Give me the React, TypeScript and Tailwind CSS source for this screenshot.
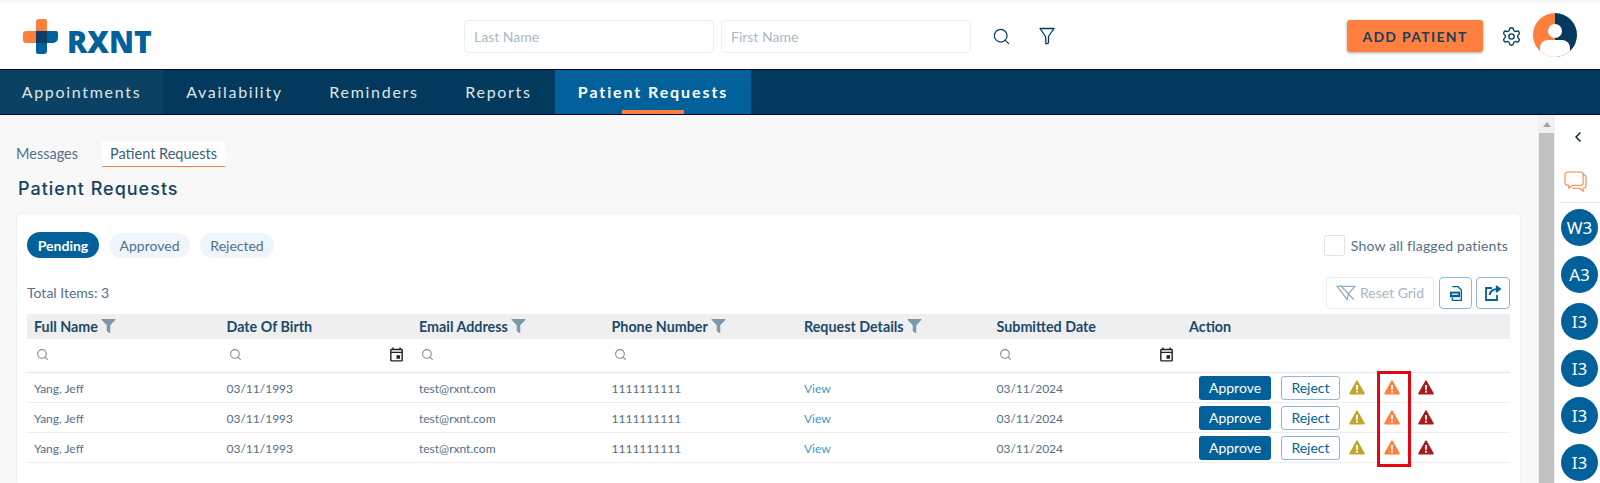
import React from 'react';
import { Search, Settings, ChevronLeft } from 'lucide-react';
import { FaFilter } from 'react-icons/fa';
import { MdOutlineEvent } from 'react-icons/md';

const columns = [
  { title: 'Full Name', filter: true, search: true },
  { title: 'Date Of Birth', search: true, calendar: true },
  { title: 'Email Address', filter: true, search: true },
  { title: 'Phone Number', filter: true, search: true },
  { title: 'Request Details', filter: true },
  { title: 'Submitted Date', search: true, calendar: true },
  { title: 'Action' },
];

const rowGrid = 'grid grid-cols-[repeat(6,192.5px)_1fr] pl-[7px]';

const Warning: React.FC<{ color: string }> = ({ color }) => (
  <svg viewBox="0 0 16 15" className="w-[16px] h-[15px]">
    <path d="M8 1.2 15 13.6H1Z" fill={color} stroke={color} strokeWidth="1.6" strokeLinejoin="round" />
    <rect x="7.1" y="5" width="1.8" height="4.8" fill="#fff" />
    <rect x="7.1" y="10.8" width="1.8" height="1.8" fill="#fff" />
  </svg>
);

const Logo = () => (
  <div className="flex items-center gap-[9px] ml-[23px] w-[441px]">
    <svg viewBox="0 0 35 35" className="w-[35px] h-[35px] shrink-0">
      <path d="M13 12V3a3 3 0 0 1 3-3h6a2 2 0 0 1 2 2v22H3a3 3 0 0 1-3-3v-6a3 3 0 0 1 3-3Z" fill="#ff7f3f" />
      <path d="M13 12h20a2 2 0 0 1 2 2v5a5 5 0 0 1-5 5h-6v8a3 3 0 0 1-3 3h-6a2 2 0 0 1-2-2Z" fill="#02609b" />
      <rect x="13" y="12" width="11" height="12" fill="#0b3d66" />
    </svg>
    <span className="font-['Open_Sans',sans-serif] font-extrabold text-[30px] leading-none text-[#02609b] mt-[12px]">RXNT</span>
  </div>
);

const Avatar = () => (
  <svg viewBox="0 0 44 44" className="w-[44px] h-[44px] -mt-[3px]">
    <defs>
      <clipPath id="avatar-clip">
        <circle cx="22" cy="22" r="22" />
      </clipPath>
    </defs>
    <g clipPath="url(#avatar-clip)">
      <rect width="22" height="44" fill="#ff7f3f" />
      <rect x="22" width="22" height="44" fill="#03395c" />
      <circle cx="22" cy="18" r="7" fill="#fff" />
      <path d="M7 44V35a8 8 0 0 1 8-8h14a8 8 0 0 1 8 8v9Z" fill="#fff" />
    </g>
  </svg>
);

const TopBar = () => (
  <header className="h-[66px] bg-white flex items-center shrink-0">
    <Logo />
    <input placeholder="Last Name" className="w-[250px] h-[33px] border border-[#ebeef1] rounded-[4px] px-[9px] text-[14px] placeholder:text-[#a9b9c6] outline-none" />
    <input placeholder="First Name" className="w-[250px] h-[33px] ml-[7px] border border-[#ebeef1] rounded-[4px] px-[9px] text-[14px] placeholder:text-[#a9b9c6] outline-none" />
    <Search className="w-[19px] h-[19px] ml-[21px] text-[#03395c]" strokeWidth={1.5} />
    <svg viewBox="0 0 16 18" className="w-[16px] h-[18px] ml-[28px]" fill="none" stroke="#03395c" strokeWidth="1.3" strokeLinejoin="round">
      <path d="M1 1.5h14L9.5 9.5V16L7 17l-.5-7.5Z" />
    </svg>
    <button className="w-[136px] h-[32px] ml-[292px] rounded-[3px] bg-[#ff7f3f] text-[#17405f] text-[14px] font-bold tracking-[1.3px] shadow-[0_1px_3px_rgba(0,0,0,0.35)]">ADD PATIENT</button>
    <Settings className="w-[21px] h-[21px] ml-[18px] text-[#03395c]" strokeWidth={1.5} />
    <div className="ml-[11px]"><Avatar /></div>
  </header>
);

const NavBar = () => (
  <nav className="h-[46px] bg-[#03395c] border-y border-[#00003f] flex shrink-0 text-[16px] tracking-[1.7px] text-[#dfe6ea]">
    <a className="w-[163px] bg-[#0b4263] flex items-center justify-center">Appointments</a>
    <a className="w-[143px] flex items-center justify-center">Availability</a>
    <a className="w-[136px] flex items-center justify-center">Reminders</a>
    <a className="w-[113px] flex items-center justify-center">Reports</a>
    <a className="relative w-[196px] bg-[#02609b] flex items-center justify-center font-bold tracking-[1.9px] text-white">
      Patient Requests
      <span className="absolute bottom-0 left-[67px] w-[62px] h-[4px] bg-[#ff7f3f]" />
    </a>
  </nav>
);

const Toolbar = () => (
  <div className="flex items-center h-[32px] mt-[19px]">
    <span className="text-[14px] text-[#53708a] pb-[1px]">Total Items: 3</span>
    <button className="ml-auto w-[108px] h-[32px] rounded-[4px] border border-[#ebeff2] flex items-center justify-center gap-[4px] text-[14px] text-[#a4b7c6] pb-[1px]">
      <svg viewBox="0 0 18 16" className="w-[20px] h-[18px]" fill="none" stroke="#8eb0c7" strokeWidth="1.2">
        <path d="M1 2 17 2 11 9 10 14 7 10ZM4 1 16 14" />
      </svg>
      Reset Grid
    </button>
    <button className="ml-[5px] w-[33px] h-[32px] rounded-[4px] border border-[#8fb6d2] flex items-center justify-center">
      <svg viewBox="0 0 14 16" className="w-[13px] h-[15px]">
        <path d="M3.6 .7h6.2l3.5 3.5v11.1H3.6v-3" fill="none" stroke="#02609b" strokeWidth="1.4" />
        <rect x="1" y="6" width="11" height="6" fill="#02609b" />
        <rect x="3" y="8" width="7" height="1.6" fill="#cfe2ef" />
      </svg>
    </button>
    <button className="ml-[4px] w-[34px] h-[32px] rounded-[4px] border border-[#8fb6d2] flex items-center justify-center">
      <svg viewBox="0 0 18 16" className="w-[18px] h-[16px]" fill="none" stroke="#02609b" strokeWidth="1.8">
        <path d="M13 10v5H2V3h6" />
        <path d="M5.5 10c.5-3.5 3.5-6 9-6" />
        <path d="M12 1l4 3-4 3" fill="#02609b" />
      </svg>
    </button>
  </div>
);

const PatientTable = () => (
  <div className="mt-[5px] text-[12px] text-[#53708a]">
    <div className={`${rowGrid} h-[25px] bg-[#efefef] items-center text-[14.3px] font-bold text-[#1c4a68]`}>
      {columns.map((c) => (
        <div key={c.title} className="flex items-center gap-[3px]">
          {c.title}
          {c.filter && <FaFilter className="w-[15px] h-[14px] text-[#7b99ad] -mt-[2px]" />}
        </div>
      ))}
    </div>
    <div className={`${rowGrid} h-[34px] items-center border-b border-[#e6e6e6]`}>
      {columns.map((c) => (
        <div key={c.title} className="flex items-center justify-between pl-[2px] pr-[14px] pb-[2px] h-full">
          {c.search ? <Search className="w-[13px] h-[13px] text-[#8a8a8a]" strokeWidth={2} /> : <span />}
          {c.calendar && <MdOutlineEvent className="w-[17px] h-[17px] text-[#222]" />}
        </div>
      ))}
    </div>
    {[0, 1, 2].map((i) => (
      <div key={i} className={`${rowGrid} h-[30px] items-center border-b border-[#eeeeee]`}>
        <div className="pt-[2px]">Yang, Jeff</div>
        <div className="pt-[2px]">03/11/1993</div>
        <div className="pt-[2px]">test@rxnt.com</div>
        <div className="pt-[2px]">1111111111</div>
        <div className="pt-[2px] text-[#3f97cf]">View</div>
        <div className="pt-[2px]">03/11/2024</div>
        <div className="flex items-center pl-[10px]">
          <button className="w-[72px] h-[24px] rounded-[3px] bg-[#02609b] text-white text-[14px]">Approve</button>
          <button className="w-[59px] h-[24px] ml-[10px] rounded-[3px] border border-[#8fb6d2] text-[#02609b] text-[14px]">Reject</button>
          <div className="ml-[9px]"><Warning color="#c3a52d" /></div>
          <div className="ml-[19px]"><Warning color="#ff7f3f" /></div>
          <div className="ml-[18px]"><Warning color="#a81c1c" /></div>
        </div>
      </div>
    ))}
  </div>
);

const Card = () => (
  <section className="relative mt-[12px] ml-[17px] mr-[18px] flex-1 bg-white rounded-t-[4px] shadow-[0_0_2px_rgba(0,0,0,0.1)] px-[10px] pt-[18px]">
    <div className="flex items-center h-[26px] gap-[10px] text-[14px]">
      <span className="w-[72px] h-[26px] rounded-full bg-[#02609b] text-white font-bold flex items-center justify-center">Pending</span>
      <span className="w-[81px] h-[25px] rounded-full bg-[#eff5fa] text-[#53708a] flex items-center justify-center">Approved</span>
      <span className="w-[74px] h-[25px] rounded-full bg-[#eff5fa] text-[#53708a] flex items-center justify-center">Rejected</span>
      <label className="ml-auto mr-[2px] flex items-center gap-[6px] tracking-[0.2px] text-[#53708a]">
        <span className="w-[21px] h-[21px] border border-[#e3e3e3] rounded-[2px]" />
        Show all flagged patients
      </label>
    </div>
    <Toolbar />
    <PatientTable />
    {/* red markup box around the orange flags */}
    <div className="absolute left-[1360px] top-[157px] w-[34px] h-[96px] border-[3px] border-[#e30613]" />
  </section>
);

const Sidebar = () => (
  <aside className="w-[45px] bg-white flex flex-col shrink-0 overflow-hidden">
    <ChevronLeft className="w-[16px] h-[16px] mt-[14px] ml-[15px] text-[#10331f]" strokeWidth={2.5} />
    <svg viewBox="0 0 24 23" className="w-[23px] h-[22px] mt-[26px] mb-[9px] ml-[9px]" fill="none" stroke="#ff7f3f" strokeWidth="1.1">
      <path d="M4 1h13a3 3 0 0 1 3 3v8a3 3 0 0 1-3 3H9l-4 3v-3H4a3 3 0 0 1-3-3V4a3 3 0 0 1 3-3Z" />
      <path d="M20 4a3 3 0 0 1 3 3v8a3 3 0 0 1-3 3v3l-4-3H9" />
    </svg>
    <div className="w-[41px] ml-[4px] border-t border-[#e8e8e8] mb-[6px]" />
    <div className="flex flex-col gap-[10px] ml-[6px]">
      {['W3', 'A3', 'I3', 'I3', 'I3', 'I3'].map((label, i) => (
        <div key={i} className="w-[37px] h-[37px] rounded-full bg-[#02609b] text-white text-[17px] font-['Noto_Sans',sans-serif] flex items-center justify-center">{label}</div>
      ))}
    </div>
  </aside>
);

export default function App() {
  return (
    <div className="h-[483px] w-[1600px] overflow-hidden flex flex-col bg-[#f8f8f8] font-['Lato',sans-serif]">
      <div className="h-[3px] bg-[#f7f7f7] shrink-0" />
      <TopBar />
      <NavBar />
      <div className="flex flex-1 min-h-0">
        <main className="w-[1538px] flex flex-col bg-[#f8f8f8]">
          <div className="flex items-center h-[26px] mt-[26px] ml-[16px] text-[14.5px] text-[#53708a]">
            <span className="w-[86px] pb-[1px]">Messages</span>
            <span className="h-[26px] px-[8px] bg-white border-b border-[#ff7f3f] flex items-center text-[#3c5f7a]">Patient Requests</span>
          </div>
          <h1 className="ml-[18px] mt-[9px] text-[18px] leading-[26px] font-['Inter',sans-serif] font-medium tracking-[1px] text-[#17405f]">Patient Requests</h1>
          <Card />
        </main>
        <div className="w-[17px] bg-[#f1f1f1] flex flex-col shrink-0">
          <div className="h-[18px] flex items-center justify-center">
            <span className="border-x-[4px] border-x-transparent border-b-[5px] border-b-[#a3a3a3]" />
          </div>
          <div className="flex-1 bg-[#c1c1c1] mx-[1px]" />
        </div>
        <Sidebar />
      </div>
    </div>
  );
}
